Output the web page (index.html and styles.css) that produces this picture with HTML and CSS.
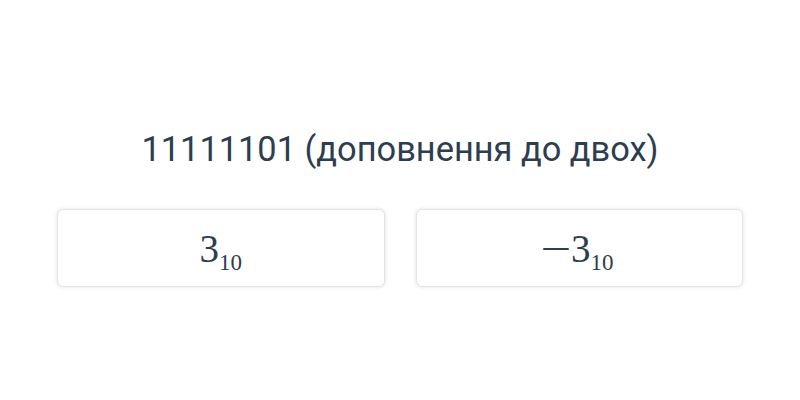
FILE: index.html
```html
<!DOCTYPE html>
<html lang="uk">
<head>
    <meta charset="UTF-8">
    <meta name="viewport" content="width=device-width, initial-scale=1.0">
    <title>Доповнення до двох</title>
    <link rel="stylesheet" href="styles.css">
</head>
<body>
    <div class="quiz">
        <h2 class="question">11111101 (доповнення до двох)</h2>
        <div class="answers">
            <button class="answer"><span class="math">3<sub>10</sub></span></button>
            <button class="answer"><span class="math"><span class="minus">&minus;</span>3<sub>10</sub></span></button>
        </div>
    </div>
</body>
</html>
```

FILE: styles.css
```css
body {
    margin: 0;
    height: 400px;
    font-family: Roboto, "Noto Sans", sans-serif;
    background-color: #ffffff;
    color: #2c3e50;
    display: flex;
    justify-content: center;
}

.quiz {
    width: 686px;
    padding-top: 126px;
}

.question {
    margin: 0 0 37px;
    font-size: 34.4px;
    font-weight: 400;
    text-align: center;
    line-height: 46px;
}

.answers {
    display: flex;
    gap: 31px;
}

.answer {
    flex: 1;
    height: 78px;
    background-color: #fff;
    border: 1px solid #e4e4e4;
    border-radius: 6px;
    box-shadow: 0 0 4px rgba(0, 0, 0, 0.12);
    color: #2c3e50;
    cursor: pointer;
    padding: 0;
}

.math {
    font-family: "Liberation Serif", "DejaVu Serif", serif;
    font-size: 39px;
}

.minus {
    display: inline-block;
    transform: scaleX(1.4);
    margin: 0 4px 0 0;
}

.math sub {
    font-size: 23px;
    vertical-align: -0.35em;
    line-height: 0;
}
```
